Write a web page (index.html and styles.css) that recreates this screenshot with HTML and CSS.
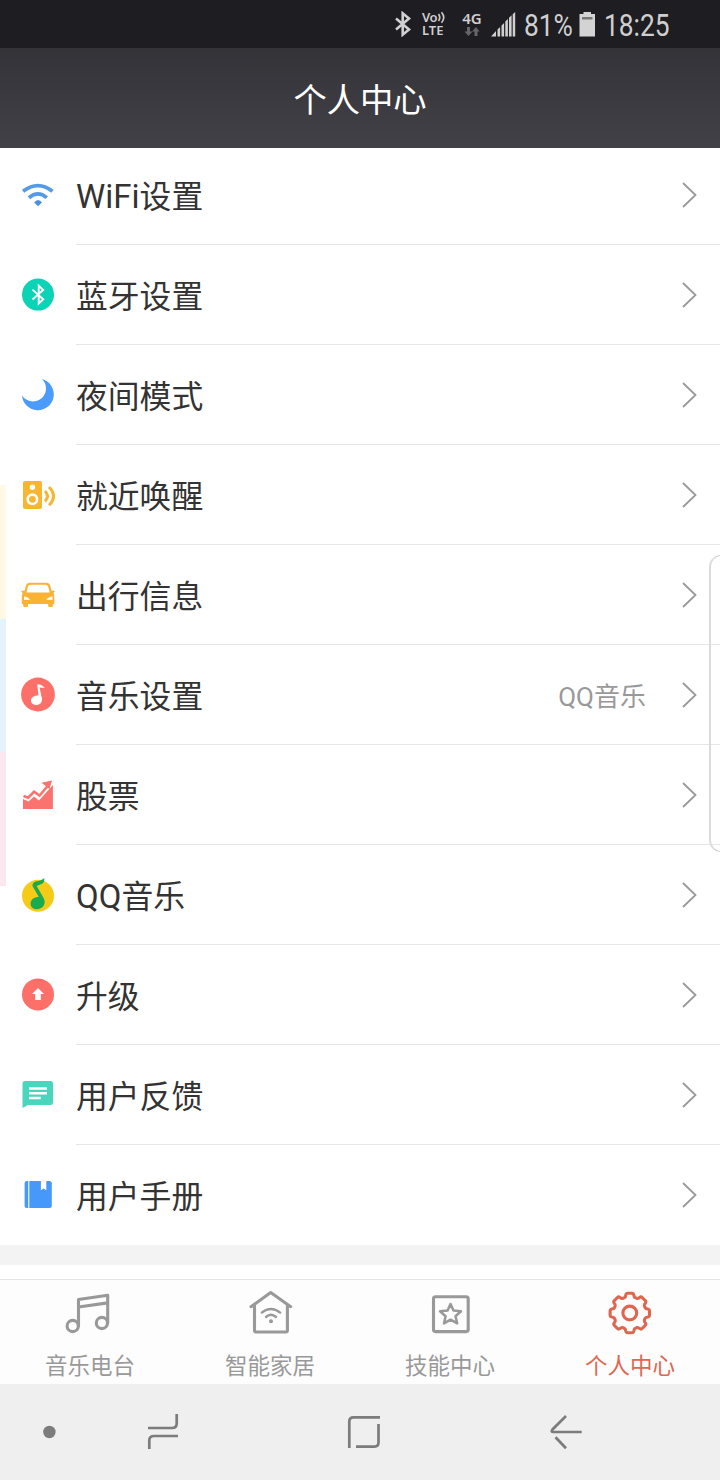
FILE: index.html
```html
<!DOCTYPE html>
<html lang="zh-CN">
<head>
<meta charset="utf-8">
<title>个人中心</title>
<link rel="stylesheet" href="styles.css">
</head>
<body>
<div class="phone">
  <header class="status">
    <svg class="status-bt" width="18" height="26" viewBox="0 0 18 26"><path d="M2 7.5 15 18.5 8.7 23.7V2.300L15 7.500 2 18.500" fill="none" stroke="#d0d0d0" stroke-width="2.600"/></svg>
    <div class="volte"><span class="volte-top">Vo<svg width="9" height="13" viewBox="0 0 9 13"><path d="M1.500 3Q4 6.500 1.500 10M4.500 1.200Q9 6.500 4.500 11.800" fill="none" stroke="#c8c8c8" stroke-width="1.700"/></svg></span><span>LTE</span></div>
    <div class="net"><span>4G</span><svg width="16" height="9" viewBox="0 0 16 9"><path d="M3 0h3v4.500h2.500L4.500 9 .5 4.500H3zM10.500 9h3V4.500H15.500L12 0 8 4.500h2.500z" fill="#66666a"/></svg></div>
    <svg class="signal" width="25" height="25" viewBox="0 0 25 25"><path d="M0 24.500 5 19v5.500zM6.500 17.500l2.600-2.600v9.600H6.500zM10.500 13.500l2.600-2.600v13.600h-2.600zM14.300 9.500l2.600-2.600v17.600h-2.600zM18 5.800l2.600-2.600v21.300H18zM21.700 2.200l2.500-2.200v24.500h-2.500z" fill="#cfcfcf"/></svg>
    <div class="percent"><span>81%</span></div>
    <svg class="battery" width="17" height="25" viewBox="0 0 17 25"><path d="M4.500 0h7.500v2H16v22.500H.5V2h4z" fill="#d3d3d3"/><path d="M3 5h10.500v2.500H3z" fill="#77777a"/></svg>
    <div class="clock"><span>18:25</span></div>
  </header>
  <h1 class="title">个人中心</h1>

  <main class="content">
    <ul class="list">
      <li class="row"><svg class="icon" viewBox="0 0 40 40"><g fill="none" stroke="#559ae6" stroke-width="3.800"><path d="M5 16.300Q20 5 34.500 16.300M10.900 22.700Q20 15 28.700 22.700"/></g><path d="M16.200 27.500Q20 22.500 24 27.500L20 31.200z" fill="#4b8fe0"/></svg><div class="cell"><span class="label"><span class="latin">WiFi</span>设置</span><svg class="chevron" viewBox="0 0 15 26"><path d="M1 1 13.500 13 1 25"/></svg></div></li>
      <li class="row"><svg class="icon" viewBox="0 0 40 40"><circle cx="20" cy="19.600" r="16" fill="#0cd2b6"/><path d="M14.500 14.600 25.200 24.300 20.700 28.500V10.700L25.200 15 14.500 24.500" fill="none" stroke="#fff" stroke-width="1.900"/></svg><div class="cell"><span class="label">蓝牙设置</span><svg class="chevron" viewBox="0 0 15 26"><path d="M1 1 13.500 13 1 25"/></svg></div></li>
      <li class="row"><svg class="icon" viewBox="0 0 40 40"><path d="M24 4A15.900 15.900 0 1 1 4 20.500 13.050 13.050 0 1 0 24 4z" fill="#4a9bfa"/></svg><div class="cell"><span class="label">夜间模式</span><svg class="chevron" viewBox="0 0 15 26"><path d="M1 1 13.500 13 1 25"/></svg></div></li>
      <li class="row"><svg class="icon" viewBox="0 0 40 40"><rect x="5" y="6" width="19" height="28" rx="2" fill="#f7b531"/><circle cx="14.400" cy="12.200" r="2.700" fill="#fff"/><circle cx="14.400" cy="24.300" r="4.700" fill="none" stroke="#fff" stroke-width="2.600"/><path d="M27 16Q32 21.200 27 26.400M31 12Q40 21.200 31 30.300" fill="none" stroke="#f7b531" stroke-width="3"/></svg><div class="cell"><span class="label">就近唤醒</span><svg class="chevron" viewBox="0 0 15 26"><path d="M1 1 13.500 13 1 25"/></svg></div></li>
      <li class="row"><svg class="icon" viewBox="0 0 40 40"><path fill-rule="evenodd" d="M12.500 7.800H28q3.500 0 4.300 3.200l1.300 4.700h2.600q.8 0 .5 1l-1.200 1.300q.8 1.500.8 3.500V29h-1.500v1.800q0 1.200-1.300 1.200h-2q-1.400 0-1.400-1.200V29H10v1.800Q10 32 8.500 32h-2q-1.300 0-1.300-1.200V29H3.800v-7.500q0-2 .8-3.500L3.200 16.700q-.1-1 .8-1h2.500L7.800 11q.8-3.200 4.700-3.200zM12.800 9.800q-2.500 0-3 2L8.500 17.500h23.200L30.200 11.800q-.6-2-3-2zM6 21.200v3.500l6 .2q-1-2.500-6-3.700zm28.500 0q-5 1.200-6.300 3.700l6.300-.2z" fill="#f9b234"/></svg><div class="cell"><span class="label">出行信息</span><svg class="chevron" viewBox="0 0 15 26"><path d="M1 1 13.500 13 1 25"/></svg></div></li>
      <li class="row"><svg class="icon" viewBox="0 0 40 40"><circle cx="20" cy="19.500" r="16.900" fill="#fd6f69"/><path d="M19.200 9.200Q21.500 9.300 23.200 10L27 12.800Q24 12.900 21.500 12.500L24 23.800Q24.600 29.700 18 29.900 12.700 29.500 12.900 25 13.700 20.800 20.500 20.300z" fill="#fff"/></svg><div class="cell"><span class="label">音乐设置</span><span class="value">QQ音乐</span><svg class="chevron" viewBox="0 0 15 26"><path d="M1 1 13.500 13 1 25"/></svg></div></li>
      <li class="row"><svg class="icon" viewBox="0 0 40 40"><path d="M5 24 10.500 26.500 16 21.500 21 25.500 34.900 10V34H5z" fill="#fb736e"/><path d="M5.500 21 10.200 22.700 16 16.800 21.500 20.600 31 9.500" fill="none" stroke="#fb736e" stroke-width="2.600"/><path d="M23.500 7.700 34 5.500 31.500 14z" fill="#fb736e"/></svg><div class="cell"><span class="label">股票</span><svg class="chevron" viewBox="0 0 15 26"><path d="M1 1 13.500 13 1 25"/></svg></div></li>
      <li class="row"><svg class="icon" viewBox="0 0 40 40"><circle cx="20" cy="20.700" r="16" fill="#f6cb17"/><path d="M26.300 3Q26.800 7.700 23.500 9L18.700 11 25.300 22.500Q27.700 27 25.800 30.500 23 34.600 18 34.300 12.800 33.600 12.500 28.500 13 22.500 20.700 21.800L14.500 11Q14.300 7.800 17.500 6.500 23.500 5.500 26.300 3z" fill="#18ab50"/></svg><div class="cell"><span class="label"><span class="latin">QQ</span>音乐</span><svg class="chevron" viewBox="0 0 15 26"><path d="M1 1 13.500 13 1 25"/></svg></div></li>
      <li class="row"><svg class="icon" viewBox="0 0 40 40"><circle cx="20" cy="19.400" r="16" fill="#fd6f69"/><path d="M20 13 26 19h-3.200v6h-5.600v-6H14z" fill="#fff"/></svg><div class="cell"><span class="label">升级</span><svg class="chevron" viewBox="0 0 15 26"><path d="M1 1 13.500 13 1 25"/></svg></div></li>
      <li class="row"><svg class="icon" viewBox="0 0 40 40"><path d="M7 6H32.500Q35 6 35 8.500V27.500Q35 30 32.500 30H10L4.500 33V8.500Q4.500 6 7 6z" fill="#4ad6bd"/><path d="M11 13.600H29M11 18.300H29M11 23H22.700" stroke="#fff" stroke-width="2.500"/></svg><div class="cell"><span class="label">用户反馈</span><svg class="chevron" viewBox="0 0 15 26"><path d="M1 1 13.500 13 1 25"/></svg></div></li>
      <li class="row"><svg class="icon" viewBox="0 0 40 40"><rect x="6.600" y="6" width="27.200" height="27" rx="2.500" fill="#4798fb"/><path d="M10.800 6V33" stroke="#fff" stroke-width="1.100"/><path d="M22.900 5.500h5.400V15.200L25.600 13.500 22.900 15.200z" fill="#fff"/></svg><div class="cell"><span class="label">用户手册</span><svg class="chevron" viewBox="0 0 15 26"><path d="M1 1 13.500 13 1 25"/></svg></div></li>
    </ul>
    <div class="separator"></div>
  </main>

  <nav class="tabs">
    <a class="tab"><svg viewBox="0 0 60 56"><circle cx="12.700" cy="41" r="5.600"/><circle cx="41.900" cy="38" r="5.600"/><path d="M18.500 41V14.500L47.700 10.300V38M18.500 22 47.700 17.900"/></svg><span>音乐电台</span></a>
    <a class="tab"><svg viewBox="0 0 60 56"><path d="M11 21.700 30.700 7.500 50.700 21.700M14.500 20V45.500q0 1.500 1.500 1.500H45.900q1.500 0 1.500-1.500V20"/><path d="M21.800 27.600Q30.800 20.300 40.200 27.600M26 32Q30.800 27.500 36 32" stroke-width="2.400"/><circle class="solid" cx="31" cy="36.200" r="2"/></svg><span>智能家居</span></a>
    <a class="tab"><svg viewBox="0 0 60 56"><rect x="13.500" y="11.800" width="34.700" height="34.800" rx="2"/><path d="M30.500 19 33.500 25.600 41 26.300 35.500 31.200 37.200 38.400 30.500 34.700 24 38.400 25.600 31.200 20 26.300 27.600 25.600z" stroke-width="2.500"/></svg><span>技能中心</span></a>
    <a class="tab tab-active"><svg viewBox="0 0 60 56"><g transform="translate(29.800 28)"><circle r="6.900"/><path d="M-5.400-15.300Q-4.200-16-4-18-3.700-19.700-2-19.700H2Q3.700-19.700 4-18 4.200-16 5.400-15.300L7-14.600Q8.500-14.200 9.900-15.600 11.300-16.600 12.500-15.300L15.300-12.500Q16.600-11.300 15.600-9.900 14.200-8.500 14.600-7L15.300-5.400Q16-4.200 18-4 19.700-3.700 19.700-2V2Q19.700 3.700 18 4 16 4.200 15.300 5.400L14.600 7Q14.200 8.500 15.600 9.900 16.600 11.300 15.300 12.500L12.500 15.300Q11.300 16.600 9.900 15.600 8.500 14.200 7 14.600L5.400 15.300Q4.200 16 4 18 3.700 19.700 2 19.700H-2Q-3.700 19.700-4 18-4.200 16-5.400 15.300L-7 14.600Q-8.500 14.200-9.900 15.600-11.300 16.600-12.500 15.300L-15.300 12.500Q-16.600 11.300-15.600 9.900-14.200 8.500-14.600 7L-15.300 5.400Q-16 4.200-18 4-19.700 3.700-19.700 2V-2Q-19.700-3.700-18-4-16-4.200-15.300-5.400L-14.600-7Q-14.200-8.500-15.600-9.900-16.600-11.300-15.300-12.500L-12.500-15.300Q-11.300-16.600-9.900-15.600-8.500-14.200-7-14.600z"/></g></svg><span>个人中心</span></a>
  </nav>

  <footer class="sysnav">
    <svg class="sys-dot" viewBox="0 0 48 48"><circle cx="24.400" cy="24" r="6.200"/></svg>
    <svg class="sys-recent" viewBox="0 0 48 48"><path d="M9 20H33Q37.700 20 37.700 15.500V6M10.300 41V32.500Q10.300 28 15 28H39"/></svg>
    <svg class="sys-home" viewBox="0 0 48 48"><path d="M9.300 40V13.500Q9.300 9.300 13.500 9.300H40M38.500 16V34.500Q38.500 38.600 34.500 38.600H16"/></svg>
    <svg class="sys-back" viewBox="0 0 48 48"><path d="M24 8 10.500 21.500Q8.500 24 11.500 24H39.700M13.500 29.200 24 40.300"/></svg>
  </footer>

  <div class="edge-left"><i></i><i></i><i></i></div>
  <div class="edge-right"></div>
</div>
</body>
</html>
```
FILE: styles.css
```css
* { box-sizing: border-box; }
body {
  margin: 0;
  font-family: Roboto, "Noto Sans CJK SC", sans-serif;
}
.phone {
  position: relative;
  display: flex;
  flex-direction: column;
  width: 720px;
  height: 1480px;
  overflow: hidden;
  background: #fff;
}
.status {
  display: flex;
  align-items: center;
  height: 48px;
  flex: none;
  padding-left: 394px;
  background: #1e1d22;
  color: #cfcfcf;
}
.volte {
  display: flex;
  flex-direction: column;
  width: 26px;
  margin-left: 10px;
  font: 600 13px/13px "Noto Sans", sans-serif;
}
.volte-top { display: flex; letter-spacing: -0.5px; }
.net {
  display: flex;
  flex-direction: column;
  align-items: center;
  width: 22px;
  margin-left: 13px;
  font: 600 15px/15px "Noto Sans", sans-serif;
}
.net span { position: relative; top: -1px; }
.signal { margin-left: 8px; }
.percent, .clock {
  font-size: 31px;
  line-height: 48px;
  padding-top: 3px;
  white-space: nowrap;
}
.percent { width: 49px; margin-left: 8px; }
.clock { width: 66px; margin-left: 8px; }
.percent span, .clock span {
  display: inline-block;
  transform: scaleX(0.85);
  transform-origin: left;
}
.battery { margin-left: 6px; }
.title {
  flex: none;
  height: 100px;
  margin: 0;
  background: linear-gradient(#343338, #424147);
  color: #fff;
  font-size: 33.3px;
  font-weight: 400;
  line-height: 105px;
  text-align: center;
}
.content {
  flex: none;
  height: 1131px;
  overflow: hidden;
}
.list {
  margin: -3px 0 0;
  padding: 0;
  list-style: none;
}
.row {
  display: flex;
  align-items: center;
  gap: 18px;
  height: 100px;
  padding-left: 18px;
}
.icon { width: 40px; height: 40px; flex: none; }
.cell {
  display: flex;
  align-items: center;
  flex: 1;
  height: 100px;
  padding-right: 23px;
  border-bottom: 1px solid #e6e6e6;
}
.row:last-child .cell { border-bottom-color: #fff; }
.label {
  flex: 1;
  padding-top: 4px;
  color: #333;
  font-size: 31.8px;
  line-height: 48px;
}
.latin { font-size: 33px; line-height: 1; }
.value {
  margin-right: 36px;
  padding-top: 4px;
  color: #999;
  font-size: 26px;
  line-height: 40px;
}
.chevron {
  width: 15px;
  height: 26px;
  fill: none;
  stroke: #999;
  stroke-width: 1.8;
}
.separator { height: 20px; background: #f3f3f3; }
.tabs {
  display: grid;
  grid-template-columns: repeat(4, 1fr);
  flex: none;
  height: 105px;
  border-top: 1px solid #e4e4e4;
  background: #fdfdfd;
}
.tab {
  display: flex;
  flex-direction: column;
  align-items: center;
  padding-top: 5px;
  color: #999;
  font-size: 22.5px;
  line-height: 32px;
}
.tab svg {
  width: 60px;
  height: 56px;
  margin-bottom: 9px;
  fill: none;
  stroke: currentColor;
  stroke-width: 3.1;
  stroke-linecap: round;
  stroke-linejoin: round;
}
.tab .solid { fill: currentColor; stroke: none; }
.tab-active { color: #e06650; }
.sysnav {
  display: flex;
  align-items: center;
  flex: none;
  height: 96px;
  padding-left: 25px;
  background: #efefef;
}
.sysnav svg {
  width: 48px;
  height: 48px;
  fill: none;
  stroke: #7c7c7c;
  stroke-width: 2.7;
}
.sysnav .sys-dot { fill: #7c7c7c; stroke: none; }
.sys-recent { margin-left: 66px; }
.sys-home { margin-left: 153px; }
.sys-back { margin-left: 154px; }
.edge-left {
  position: absolute;
  left: 0;
  top: 485px;
  width: 6px;
  display: grid;
  grid-template-rows: 134px 133px 134px;
}
.edge-left i:nth-child(1) { background: #fff9e5; }
.edge-left i:nth-child(2) { background: #e4f3fc; }
.edge-left i:nth-child(3) { background: #fae7ef; }
.edge-right {
  position: absolute;
  left: 709px;
  top: 555px;
  width: 24px;
  height: 297px;
  border: 1px solid #cfcfcf;
  border-left: 2px solid #dcdcdc;
  border-radius: 12px;
}
```
